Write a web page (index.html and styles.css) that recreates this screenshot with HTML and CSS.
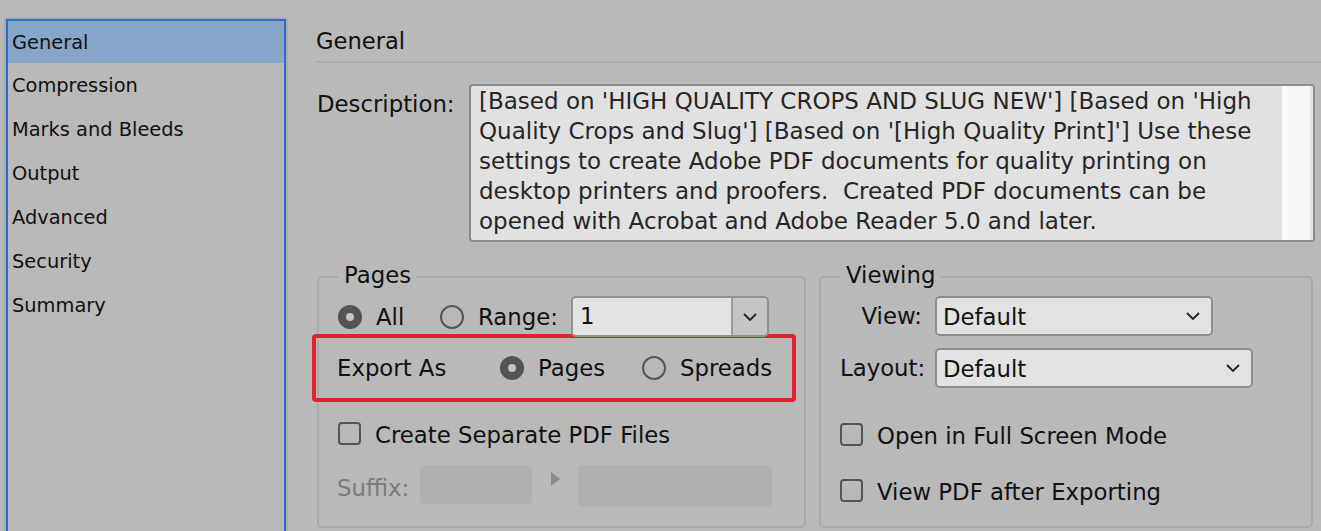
FILE: index.html
```html
<!DOCTYPE html>
<html>
<head>
<meta charset="utf-8">
<link rel="stylesheet" href="styles.css">
</head>
<body>
<nav class="sidebar">
  <div class="nav-item selected">General</div>
  <div class="nav-item">Compression</div>
  <div class="nav-item">Marks and Bleeds</div>
  <div class="nav-item">Output</div>
  <div class="nav-item">Advanced</div>
  <div class="nav-item">Security</div>
  <div class="nav-item">Summary</div>
</nav>
<main class="main">
  <div class="heading">General</div>
  <div class="desc-row">
    <div class="desc-label">Description:</div>
    <div class="desc-box">
      <div class="desc-text">[Based on 'HIGH QUALITY CROPS AND SLUG NEW'] [Based on 'High<br>Quality Crops and Slug'] [Based on '[High Quality Print]'] Use these<br>settings to create Adobe PDF documents for quality printing on<br>desktop printers and proofers.&nbsp; Created PDF documents can be<br>opened with Acrobat and Adobe Reader 5.0 and later.</div>
      <div class="desc-scroll"></div>
    </div>
  </div>
  <div class="groups">
    <section class="group pages">
      <div class="group-title">Pages</div>
      <div class="row row-range">
        <div class="opt opt-all"><span class="radio on"></span><span class="opt-text">All</span></div>
        <div class="opt opt-range"><span class="radio"></span><span class="opt-text">Range:</span></div>
        <div class="combo">
          <div class="combo-input">1</div>
          <div class="combo-btn"><svg width="14" height="8" viewBox="0 0 14 8"><polyline points="1,1 7,7 13,1" fill="none" stroke="#222" stroke-width="1.8"/></svg></div>
        </div>
      </div>
      <div class="row export-row">
        <div class="export-label">Export As</div>
        <div class="opt opt-pages"><span class="radio on"></span><span class="opt-text">Pages</span></div>
        <div class="opt"><span class="radio"></span><span class="opt-text">Spreads</span></div>
      </div>
      <div class="row check-row">
        <span class="checkbox"></span><span class="check-text">Create Separate PDF Files</span>
      </div>
      <div class="row suffix-row">
        <div class="suffix-label">Suffix:</div>
        <div class="field field-a"></div>
        <div class="tri"></div>
        <div class="field field-b"></div>
      </div>
    </section>
    <section class="group viewing">
      <div class="group-title">Viewing</div>
      <div class="row sel-row first">
        <div class="sel-label">View:</div>
        <div class="select sel-view"><span>Default</span><svg width="14" height="8" viewBox="0 0 14 8"><polyline points="1,1 7,7 13,1" fill="none" stroke="#222" stroke-width="1.8"/></svg></div>
      </div>
      <div class="row sel-row second">
        <div class="sel-label">Layout:</div>
        <div class="select sel-layout"><span>Default</span><svg width="14" height="8" viewBox="0 0 14 8"><polyline points="1,1 7,7 13,1" fill="none" stroke="#222" stroke-width="1.8"/></svg></div>
      </div>
      <div class="row check-row v1">
        <span class="checkbox"></span><span class="check-text">Open in Full Screen Mode</span>
      </div>
      <div class="row check-row v2">
        <span class="checkbox"></span><span class="check-text">View PDF after Exporting</span>
      </div>
    </section>
  </div>
</main>
</body>
</html>
```
FILE: styles.css
```css
html, body {
  margin: 0;
  padding: 0;
}
body {
  background: #b9b9b9;
  font-family: "DejaVu Sans", Verdana, sans-serif;
  color: #111;
  display: flex;
  align-items: flex-start;
  width: 1321px;
  height: 531px;
  overflow: hidden;
}
.sidebar {
  flex: none;
  margin: 19px 0 0 6px;
  width: 280px;
  height: 600px;
  box-sizing: border-box;
  border: 2px solid #2e6cc5;
  box-shadow: 0 0 0 2px #acacac;
}
.nav-item {
  height: 44px;
  display: flex;
  align-items: center;
  padding-left: 4px;
  font-size: 19.4px;
  color: #111;
}
.nav-item.selected {
  background: #86a5c8;
  height: 42px;
}
.main {
  flex: 1;
  margin-left: 30px;
  font-size: 22.8px;
}
.heading {
  margin-top: 21px;
  line-height: 40px;
  height: 40px;
  font-size: 22.6px;
  border-bottom: 2px solid #acacac;
}
.desc-row {
  display: flex;
  margin-top: 21px;
}
.desc-label {
  width: 152px;
  padding-left: 1px;
  padding-top: 5px;
  line-height: 30px;
}
.desc-box {
  width: 846px;
  height: 158px;
  box-sizing: border-box;
  border: 2px solid #8b8b8b;
  border-radius: 4px;
  background: #e1e1e1;
  display: flex;
  overflow: hidden;
}
.desc-text {
  flex: 1;
  padding-left: 8px;
  line-height: 30px;
  font-size: 23px;
  color: #262626;
  white-space: nowrap;
}
.desc-scroll {
  width: 28px;
  background: #f7f7f7;
  border-right: 3px solid #e6e6e6;
}
.groups {
  display: flex;
  gap: 13px;
  margin-top: 34px;
  margin-left: 1px;
}
.group {
  height: 252px;
  box-sizing: border-box;
  border: 2px solid #a9a9a9;
  border-radius: 5px;
}
.group.pages { width: 489px; }
.group.viewing { width: 494px; }
.group-title {
  margin-top: -16px;
  margin-left: 19px;
  padding: 0 6px;
  width: fit-content;
  line-height: 26px;
  height: 26px;
  background: #b9b9b9;
}
.row {
  display: flex;
  align-items: center;
}
.row-range {
  margin-top: 8px;
  height: 41px;
  padding-left: 19px;
}
.opt {
  display: flex;
  align-items: center;
}
.opt-all { width: 102px; }
.opt-range { width: 131px; }
.opt-pages { width: 142px; }
.opt-text {
  margin-left: 14px;
}
.radio {
  width: 24px;
  height: 24px;
  box-sizing: border-box;
  border-radius: 50%;
  border: 2px solid #575757;
  display: flex;
  align-items: center;
  justify-content: center;
  flex: none;
}
.radio.on {
  background: #545454;
  border-color: #545454;
}
.radio.on::after {
  content: "";
  width: 8px;
  height: 8px;
  border-radius: 50%;
  background: #c4c4c4;
}
.combo {
  width: 198px;
  height: 41px;
  box-sizing: border-box;
  border: 2px solid #919191;
  border-radius: 5px;
  display: flex;
  overflow: hidden;
}
.combo-input {
  flex: 1;
  background: #e3e3e3;
  padding-left: 7px;
  line-height: 37px;
}
.combo-btn {
  width: 34px;
  border-left: 2px solid #9c9c9c;
  background: #c4c4c4;
  display: flex;
  align-items: center;
  justify-content: center;
}
.export-row {
  margin-top: -3px;
  margin-left: -7px;
  width: 484px;
  height: 68px;
  box-sizing: border-box;
  border: 4px solid #e3222e;
  border-radius: 4px;
  padding-left: 21px;
}
.export-label { width: 163px; }
.check-row {
  height: 30px;
  padding-left: 19px;
}
.pages .check-row { margin-top: 16px; }
.checkbox {
  width: 23px;
  height: 23px;
  box-sizing: border-box;
  border: 2px solid #555;
  border-radius: 4px;
  flex: none;
}
.check-text {
  margin-left: 14px;
  padding-top: 4px;
}
.suffix-row {
  margin-top: 17px;
  height: 42px;
  padding-left: 18px;
  align-items: flex-start;
}
.suffix-label {
  width: 83px;
  color: #7b7b7b;
  line-height: 42px;
  padding-top: 2px;
}
.field {
  background: #b0b0b0;
  border-radius: 4px;
}
.field-a {
  width: 112px;
  height: 39px;
}
.tri {
  margin: 7px 0 0 19px;
  width: 0;
  height: 0;
  border-left: 9px solid #8a8a8a;
  border-top: 7px solid transparent;
  border-bottom: 7px solid transparent;
}
.field-b {
  margin-left: 18px;
  width: 194px;
  height: 42px;
}
.sel-row {
  height: 40px;
  padding-left: 19px;
}
.sel-row.first { margin-top: 8px; }
.sel-row.second { margin-top: 12px; }
.sel-label {
  width: 82px;
  margin-right: 13px;
  text-align: right;
}
.select {
  height: 40px;
  box-sizing: border-box;
  border: 2px solid #8e8e8e;
  border-radius: 5px;
  background: #e2e2e2;
  display: flex;
  align-items: center;
  justify-content: space-between;
  padding: 0 11px 0 6px;
}
.select span { padding-top: 1px; }
.sel-view { width: 278px; }
.sel-layout { width: 318px; }
.viewing .check-row.v1 { margin-top: 31px; }
.viewing .check-row.v2 { margin-top: 26px; }
```
